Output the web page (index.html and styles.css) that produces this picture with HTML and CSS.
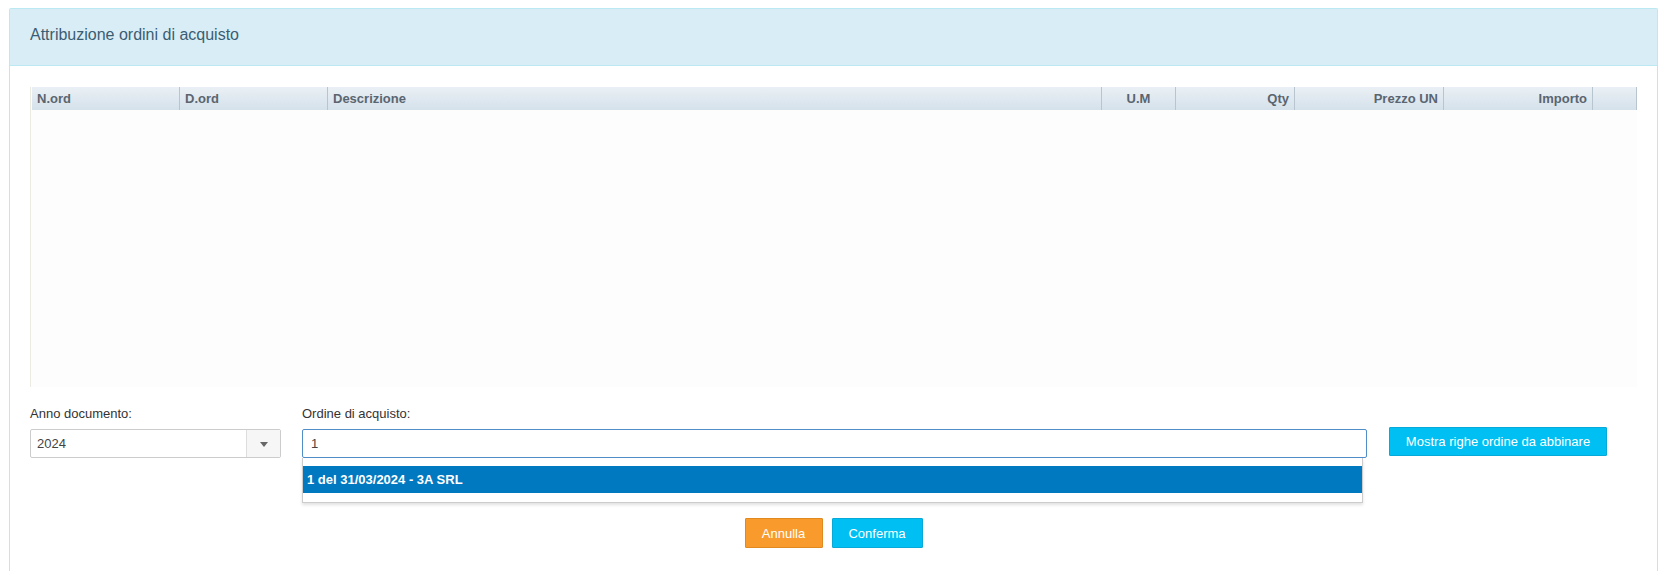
FILE: index.html
```html
<!DOCTYPE html>
<html lang="it">

<head>
    <meta charset="UTF-8">
    <meta name="viewport" content="width=device-width, initial-scale=1.0">
    <title>Attribuzione ordini di acquisto</title>
    <link rel="stylesheet" href="styles.css">
</head>

<body>
    <div class="panel">
        <div class="panel-heading">Attribuzione ordini di acquisto</div>

        <div class="panel-body">
            <!--griglia righe ordine-->
            <div class="grid">
                <div class="grid-head">
                    <div class="col c-nord">N.ord</div>
                    <div class="col c-dord">D.ord</div>
                    <div class="col c-descr">Descrizione</div>
                    <div class="col c-um">U.M</div>
                    <div class="col c-qty right">Qty</div>
                    <div class="col c-prezzo right">Prezzo UN</div>
                    <div class="col c-importo right">Importo</div>
                    <div class="col c-scroll"></div>
                </div>
                <div class="grid-body"></div>
            </div>

            <div class="form-row">
                <div class="field f-anno">
                    <label>Anno documento:</label>
                    <div class="select">
                        <span class="select-value">2024</span>
                        <span class="select-arrow"></span>
                    </div>
                </div>
                <div class="field f-ordine">
                    <label>Ordine di acquisto:</label>
                    <input type="text" class="input" value="1">
                    <!--autocomplete-->
                    <ul class="suggest">
                        <li class="active">1 del 31/03/2024 - 3A SRL</li>
                    </ul>
                </div>
                <div class="field f-mostra">
                    <button class="btn btn-info">Mostra righe ordine da abbinare</button>
                </div>
            </div>

            <div class="actions">
                <button class="btn btn-warning">Annulla</button>
                <button class="btn btn-info btn-conferma">Conferma</button>
            </div>
        </div>
    </div>
</body>

</html>
```

FILE: styles.css
```css
* {
    margin: 0;
    padding: 0;
    box-sizing: border-box;
}

body {
    padding: 8px 8px 0 9px;
    font-family: "Liberation Sans", Arial, sans-serif;
    font-size: 13px;
    color: #333;
    background-color: #fff;
    overflow: hidden;
}

.panel {
    height: 563px;
    border: 1px solid #bce8f1;
    border-bottom: 0;
    border-radius: 2px 2px 0 0;
}

.panel-heading {
    height: 57px;
    line-height: 52px;
    padding-left: 20px;
    font-size: 16px;
    color: #3b5d72;
    background-color: #d9edf7;
    border-bottom: 1px solid #bce8f1;
}

.panel-body {
    padding: 21px 20px 0 20px;
}

/* griglia */
.grid {
    height: 300px;
    border-left: 1px solid #ebebe4;
    background-color: #fdfdfd;
}

.grid-head {
    display: flex;
    height: 23px;
    margin-left: 1px;
    background: linear-gradient(#eaf0f5, #d5e1eb);
}

.grid-head .col {
    line-height: 23px;
    padding: 0 5px;
    font-weight: bold;
    color: #5a6570;
    border-right: 1px solid #b8c4ce;
    white-space: nowrap;
}

.grid-head .right {
    text-align: right;
}

.c-nord { width: 148px; }
.c-dord { width: 148px; }
.c-descr { width: 774px; }
.c-um { width: 74px; text-align: center; }
.c-qty { width: 119px; }
.c-prezzo { width: 149px; }
.c-importo { width: 149px; }

.grid-head .c-scroll {
    flex: 1;
    border-right: 0;
    position: relative;
}

.grid-head .c-scroll::after {
    content: "";
    position: absolute;
    right: 0;
    top: 0;
    height: 23px;
    border-right: 1px solid #b8c4ce;
}

/* campi */
.form-row {
    display: flex;
    margin-top: 19px;
}

.field label {
    display: block;
    height: 23px;
    line-height: 16px;
    color: #333;
}

.f-anno {
    width: 251px;
}

.select {
    display: flex;
    height: 29px;
    border: 1px solid #ccc;
    border-radius: 2px;
    background-color: #fff;
}

.select-value {
    flex: 1;
    line-height: 27px;
    padding-left: 6px;
    color: #444;
}

.select-arrow {
    width: 34px;
    border-left: 1px solid #ddd;
    background-color: #f6f6f6;
    position: relative;
}

.select-arrow::after {
    content: "";
    position: absolute;
    left: 13px;
    top: 12px;
    border-top: 5px solid #666;
    border-left: 4px solid transparent;
    border-right: 4px solid transparent;
}

.f-ordine {
    position: relative;
    width: 1065px;
    margin-left: 21px;
}

.input {
    display: block;
    width: 100%;
    height: 29px;
    padding-left: 8px;
    font-family: inherit;
    font-size: 13px;
    color: #444;
    border: 1px solid #4f8ec7;
    border-radius: 2px;
    outline: none;
}

.suggest {
    position: absolute;
    left: 0;
    top: 52px;
    width: 1061px;
    padding: 8px 0 9px;
    list-style: none;
    background-color: #fff;
    border: 1px solid #ccc;
    border-top: 0;
    box-shadow: 0 2px 3px rgba(0, 0, 0, .12);
    z-index: 10;
}

.suggest li {
    height: 27px;
    line-height: 27px;
    padding-left: 4px;
    font-weight: bold;
    color: #fff;
}

.suggest .active {
    background-color: #0179c1;
}

.f-mostra {
    margin-left: 22px;
    padding-top: 21px;
}

/* pulsanti */
.btn {
    height: 30px;
    padding: 0 12px;
    font-family: inherit;
    font-size: 13px;
    color: #fff;
    border: 1px solid transparent;
    border-radius: 1px;
    cursor: pointer;
}

.btn-info {
    background-color: #00bff3;
    border-color: #07a9d8;
}

.f-mostra .btn {
    width: 218px;
    height: 29px;
}

.btn-warning {
    width: 78px;
    background-color: #f89b2c;
    border-color: #e0891f;
}

.btn-conferma {
    width: 91px;
}

.actions {
    display: flex;
    justify-content: center;
    gap: 9px;
    margin-top: 60px;
}
```
